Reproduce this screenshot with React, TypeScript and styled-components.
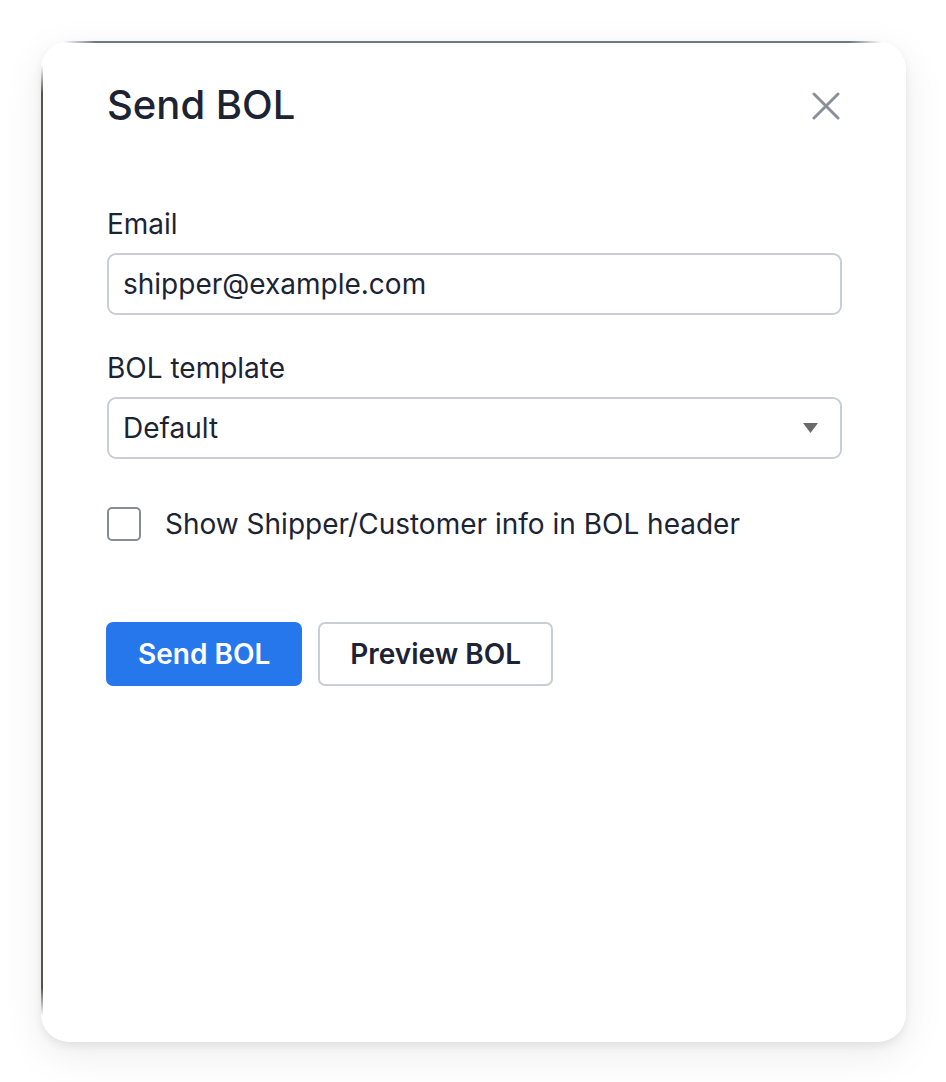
import React from "react";
import styled, { createGlobalStyle } from "styled-components";

const Global = createGlobalStyle`
  html, body { margin: 0; padding: 0; background: #ffffff; }
  body { font-family: Inter, "Noto Sans", "Liberation Sans", sans-serif; color: #1c2434; }
  * { box-sizing: border-box; }
`;

const Page = styled.div`
  padding: 41px 40px 40px 41px;
`;

const Card = styled.div`
  position: relative;
  width: 865px;
  height: 1001px;
  background: #ffffff;
  border-radius: 28px;
  padding: 40px 64px 0 66px;
  box-shadow: 0 4px 8px rgba(0, 0, 0, 0.07), 0 12px 40px rgba(0, 0, 0, 0.08);
  display: flex;
  flex-direction: column;

  &::before {
    content: "";
    position: absolute;
    top: 0;
    left: 22px;
    right: 24px;
    height: 2px;
    background: linear-gradient(
      to right,
      rgba(111, 121, 130, 0),
      #6f7982 4%,
      #6f7982 96%,
      rgba(111, 121, 130, 0)
    );
  }

  &::after {
    content: "";
    position: absolute;
    left: 0;
    top: 24px;
    bottom: 26px;
    width: 1.5px;
    background: linear-gradient(
      to bottom,
      rgba(85, 83, 75, 0),
      #55534b 3%,
      #55534b 97%,
      rgba(85, 83, 75, 0)
    );
  }
`;

const Header = styled.div`
  display: flex;
  align-items: center;
  justify-content: space-between;
`;

const Title = styled.h2`
  margin: 0;
  font-size: 40px;
  line-height: 48px;
  font-weight: 500;
  color: #1c2434;
`;

const CloseButton = styled.button`
  width: 32px;
  height: 32px;
  padding: 0;
  border: none;
  background: transparent;
  display: flex;
  align-items: center;
  justify-content: center;
  margin-top: 2px;
  cursor: pointer;
`;

const Field = styled.div<{ $top: number }>`
  display: flex;
  flex-direction: column;
  margin-top: ${(p) => p.$top}px;
`;

const Label = styled.label`
  font-size: 28px;
  line-height: 32px;
  font-weight: 400;
  color: #1c2434;
  margin-bottom: 13px;
`;

const TextInput = styled.div`
  height: 62px;
  border: 2px solid #c9ced6;
  border-radius: 9px;
  padding: 0 14px;
  display: flex;
  align-items: center;
  font-size: 28px;
  color: #1c2434;
`;

const SelectBox = styled(TextInput)`
  justify-content: space-between;
  padding-right: 22px;
`;

const CheckRow = styled.label`
  display: flex;
  align-items: center;
  gap: 24px;
  margin-top: 48px;
  font-size: 28px;
  line-height: 34px;
  color: #1c2434;
`;

const Box = styled.span`
  width: 34px;
  height: 34px;
  border: 2px solid #868b94;
  border-radius: 5px;
  flex-shrink: 0;
`;

const Actions = styled.div`
  display: flex;
  gap: 16px;
  margin-top: 81px;
  margin-left: -1px;
`;

const Button = styled.button<{ $primary?: boolean }>`
  height: 64px;
  padding: 0 30px;
  border-radius: 7px;
  font-family: Inter, "Noto Sans", "Liberation Sans", sans-serif;
  font-size: 28px;
  font-weight: 600;
  border: 2px solid ${(p) => (p.$primary ? "#2777ec" : "#c9ced6")};
  background: ${(p) => (p.$primary ? "#2777ec" : "#ffffff")};
  color: ${(p) => (p.$primary ? "#ffffff" : "#1c2434")};
  cursor: pointer;
`;

export default function App() {
  return (
    <>
      <Global />
      <Page>
        <Card>
          <Header>
            <Title>Send BOL</Title>
            <CloseButton aria-label="Close">
              <svg width="28" height="28" viewBox="0 0 28 28">
                <path d="M2 2 L26 26 M26 2 L2 26" stroke="#8a9099" strokeWidth="3" strokeLinecap="round" />
              </svg>
            </CloseButton>
          </Header>
          <Field $top={79}>
            <Label>Email</Label>
            <TextInput>shipper@example.com</TextInput>
          </Field>
          <Field $top={37}>
            <Label>BOL template</Label>
            <SelectBox>
              <span>Default</span>
              <svg width="15" height="10" viewBox="0 0 15 10">
                <path d="M0 0 L15 0 L7.5 10 Z" fill="#6b6b6b" />
              </svg>
            </SelectBox>
          </Field>
          <CheckRow>
            <Box />
            <span>Show Shipper/Customer info in BOL header</span>
          </CheckRow>
          <Actions>
            <Button $primary>Send BOL</Button>
            <Button>Preview BOL</Button>
          </Actions>
        </Card>
      </Page>
    </>
  );
}
